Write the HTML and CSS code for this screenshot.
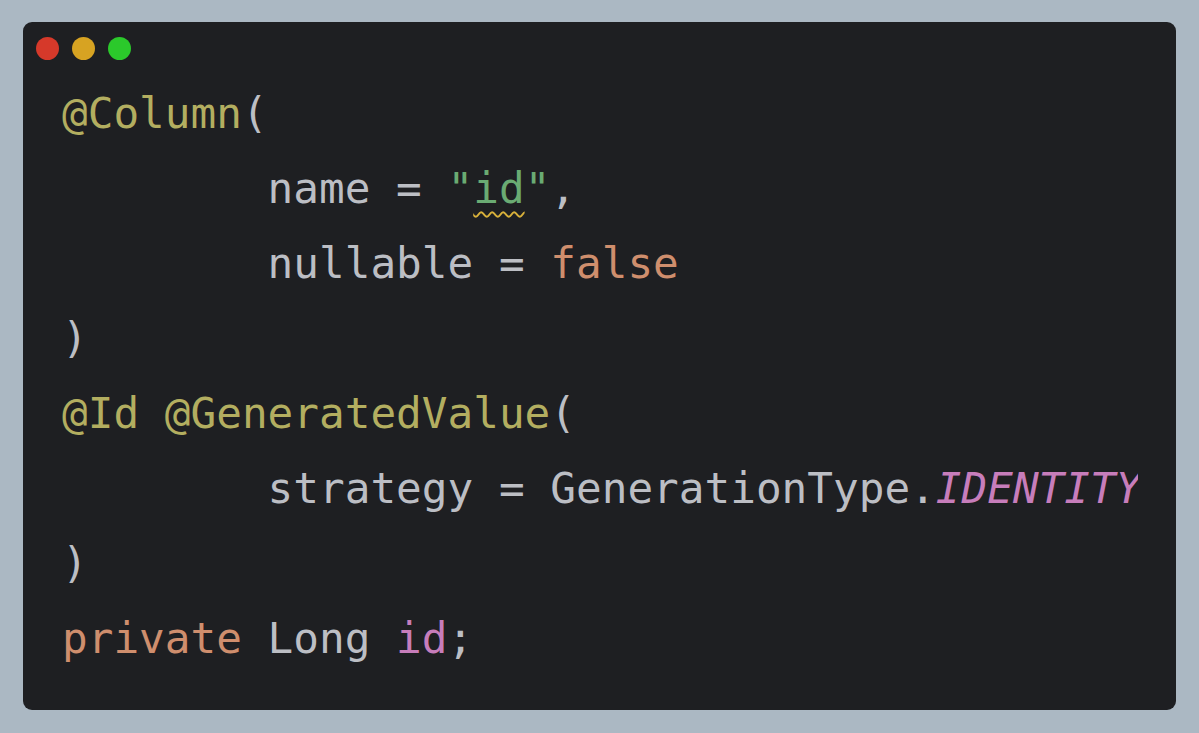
FILE: index.html
```html
<!DOCTYPE html>
<html>
<head>
<meta charset="utf-8">
<link rel="stylesheet" href="styles.css">
</head>
<body>
<div class="window">
  <div class="titlebar">
    <span class="dot red"></span>
    <span class="dot yellow"></span>
    <span class="dot green"></span>
  </div>
  <div class="code"><div class="line"><span class="ann">@Column</span>(</div><div class="line">        name = <span class="str">"<span class="warn">id</span>"</span>,</div><div class="line">        nullable = <span class="kw">false</span></div><div class="line">)</div><div class="line"><span class="ann">@Id</span> <span class="ann">@GeneratedValue</span>(</div><div class="line">        strategy = GenerationType.<span class="const">IDENTITY</span></div><div class="line">)</div><div class="line"><span class="kw">private</span> Long <span class="field">id</span>;</div></div>
</div>
</body>
</html>
```

FILE: styles.css
```css
html, body {
  margin: 0;
  padding: 0;
}
body {
  background: #abb8c3;
  width: 1199px;
  height: 733px;
  overflow: hidden;
  padding-top: 22px;
  box-sizing: border-box;
}
.window {
  margin: 0 23px;
  height: 688px;
  background: #1e1f22;
  border-radius: 9px;
  box-sizing: border-box;
  padding: 15px 38px 0 13px;
}
.titlebar {
  display: flex;
  gap: 13px;
  height: 23px;
}
.dot {
  width: 23px;
  height: 23px;
  border-radius: 50%;
  display: block;
}
.red { background: #d6392a; }
.yellow { background: #d7a322; }
.green { background: #2bc92b; }
.code {
  margin-top: 16px;
  padding-left: 26px;
  overflow: hidden;
  white-space: pre;
  font-family: "DejaVu Sans Mono", "Liberation Mono", monospace;
  font-size: 42.7px;
  line-height: 75px;
  color: #bcbec4;
}
.line {
  height: 75px;
}
.ann { color: #b3ae60; }
.str { color: #6aab73; }
.kw { color: #cf8e6d; }
.field { color: #c77dbb; }
.const { color: #c77dbb; font-style: italic; }
.warn {
  text-decoration: underline wavy #d9b13a;
  text-decoration-thickness: 2px;
  text-underline-offset: 8px;
}
```
